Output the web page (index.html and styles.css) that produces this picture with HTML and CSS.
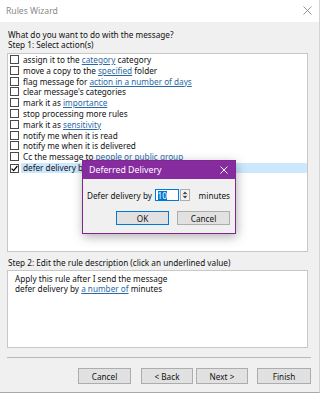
FILE: index.html
```html
<html>
<head>
<title>Rules Wizard</title>
<link rel="stylesheet" href="styles.css">
</head>
<body>
<div class="window">
  <div class="titlebar">
    <span class="title">Rules Wizard</span>
    <svg class="close" width="9" height="9" viewBox="0 0 9 9"><path d="M0.5 0.5L8.5 8.5M8.5 0.5L0.5 8.5" stroke="#8a8a8a" stroke-width="0.9"/></svg>
  </div>
  <div class="content">
    <div class="question">What do you want to do with the message?</div>
    <div class="label">Step 1: Select action(s)</div>
    <div class="listbox">
      <div class="item"><span class="box"></span>assign it to the <a>category</a> category</div>
      <div class="item"><span class="box"></span>move a copy to the <a>specified</a> folder</div>
      <div class="item"><span class="box"></span>flag message for <a>action in a number of days</a></div>
      <div class="item"><span class="box"></span>clear message's categories</div>
      <div class="item"><span class="box"></span>mark it as <a>importance</a></div>
      <div class="item"><span class="box"></span>stop processing more rules</div>
      <div class="item"><span class="box"></span>mark it as <a>sensitivity</a></div>
      <div class="item"><span class="box"></span>notify me when it is read</div>
      <div class="item"><span class="box"></span>notify me when it is delivered</div>
      <div class="item"><span class="box"></span>Cc the message to <a>people or public group</a></div>
      <div class="item selected"><span class="box"><svg width="7" height="7" viewBox="0 0 7 7"><path d="M0.6 3.6L2.6 5.6L6.4 1" fill="none" stroke="#000" stroke-width="1.2"/></svg></span><span class="seltext">defer delivery by <a>a number of</a> minutes</span></div>
    </div>
    <div class="label step2">Step 2: Edit the rule description (click an underlined value)</div>
    <div class="descbox">
      <div>Apply this rule after I send the message</div>
      <div>defer delivery by <a>a number of</a> minutes</div>
    </div>
    <div class="separator"></div>
    <div class="buttons">
      <button class="btn cancel">Cancel</button>
      <button class="btn back">&lt; Back</button>
      <button class="btn next">Next &gt;</button>
      <button class="btn finish">Finish</button>
    </div>
  </div>

  <div class="dialog">
    <div class="dlg-title">
      <span>Deferred Delivery</span>
      <svg width="8" height="8" viewBox="0 0 8 8"><path d="M0.5 0.5L7.5 7.5M7.5 0.5L0.5 7.5" stroke="#fff" stroke-width="1"/></svg>
    </div>
    <div class="dlg-body">
      <div class="dlg-row">
        <span class="dlg-label">Defer delivery by</span>
        <div class="field"><span class="sel">10</span></div>
        <div class="arrows">
          <svg width="6" height="10" viewBox="0 0 6 10"><path d="M0.8 4L3 1.6L5.2 4Z" fill="#444"/><path d="M0 5H6" stroke="#c4c4c4"/><path d="M0.8 6L3 8.4L5.2 6Z" fill="#444"/></svg>
        </div>
        <span class="unit">minutes</span>
      </div>
      <div class="dlg-buttons">
        <button class="btn ok">OK</button>
        <button class="btn">Cancel</button>
      </div>
    </div>
  </div>
</div>
</body>
</html>
```

FILE: styles.css
```css
body {
margin:0;
font-family:"Noto Sans", "Open Sans", sans-serif;
font-size:8.2px;
color:#111;
}
.window {
position:relative;
width:319px;
height:392px;
border-right:1px solid #d4d4d4;
border-bottom:1px solid #a8a8a8;
background-color:#f0f0f0;
overflow:hidden;
}
.titlebar {
height:21px;
background-color:#fff;
display:flex;
align-items:center;
justify-content:space-between;
padding:0 7px 1px 6px;
}
.title {
color:#8a8a8a;
font-size:8.6px;
}
.content {
padding:8px 11px 0 7px;
display:flex;
flex-direction:column;
}
.question {
line-height:10px;
padding-left:1px;
}
.label {
line-height:10px;
padding-left:1px;
}
.listbox {
box-sizing:border-box;
height:199px;
background-color:#fff;
border:1px solid #c8c8c8;
margin-top:3px;
padding-top:1px;
}
.item {
height:10.8px;
line-height:10.8px;
white-space:nowrap;
padding-left:2px;
}
.box {
display:inline-flex;
vertical-align:-1px;
box-sizing:border-box;
width:9px;
height:9px;
border:1px solid #4a4a4a;
background-color:#fff;
margin-right:4px;
align-items:center;
justify-content:center;
}
.selected {
display:flex;
align-items:center;
}
.selected .box {
margin-right:2px;
}
.seltext {
display:block;
flex:1;
background-color:#cce8ff;
height:10px;
line-height:10px;
padding-left:2px;
}
a {
color:#2a6aa6;
text-decoration:underline;
}
.step2 {
margin-top:6px;
}
.descbox {
box-sizing:border-box;
height:78px;
background-color:#fff;
border:1px solid #c8c8c8;
margin-top:2px;
padding:3px 7px;
line-height:9.5px;
}
.separator {
height:1px;
background-color:#b8b8b8;
margin:9px -3px 0 0;
}
.buttons {
display:flex;
justify-content:flex-end;
margin:10px -3px 0 0;
}
.btn {
font-family:inherit;
font-size:8.2px;
width:53px;
height:16px;
padding:0;
background-color:#e1e1e1;
border:1px solid #adadad;
color:#111;
margin-left:10px;
}
.back {
width:52px;
}
.next {
width:52px;
margin-left:3px;
}
.finish {
width:54px;
margin-left:9px;
}
.dialog {
position:absolute;
left:82px;
top:160px;
width:152px;
border:1px solid #80278f;
background-color:#f0f0f0;
box-shadow:1px 3px 10px rgba(0,0,0,0.3);
}
.dlg-title {
height:18px;
background-color:#862c9f;
color:#fff;
font-size:8.8px;
display:flex;
align-items:center;
justify-content:space-between;
padding:0 7px 0 6px;
}
.dlg-body {
padding:10px 5px 8px 4px;
}
.dlg-row {
display:flex;
align-items:center;
white-space:nowrap;
}
.dlg-label {
width:70px;
}
.field {
box-sizing:border-box;
width:25px;
height:12px;
border:1px solid #0078d7;
background-color:#fff;
display:flex;
align-items:center;
padding-left:2px;
}
.sel {
background-color:#0078d7;
color:#fff;
line-height:9px;
}
.arrows {
box-sizing:border-box;
margin-left:1px;
width:10px;
height:12px;
border:1px solid #adadad;
background-color:#f4f4f4;
display:flex;
align-items:center;
justify-content:center;
}
.unit {
margin-left:9px;
}
.dlg-buttons {
display:flex;
justify-content:flex-end;
margin-top:10px;
gap:8px;
}
.dlg-buttons .btn {
margin-left:0;
width:53px;
height:14px;
}
.ok {
border:1px solid #0078d7;
}
```
